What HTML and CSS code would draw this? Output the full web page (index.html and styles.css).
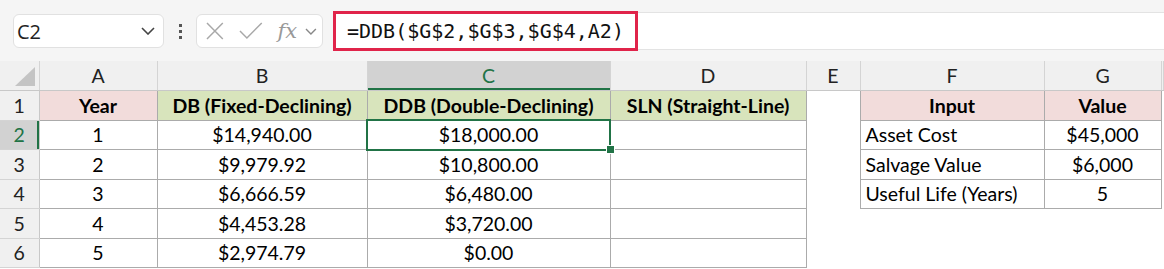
FILE: index.html
```html
<!DOCTYPE html>
<html lang="en">

<head>
  <meta charset="utf-8">
  <title>DDB depreciation</title>
  <link rel="stylesheet" href="styles.css">
</head>

<body>
  <div class="toolbar">
    <div class="name-box">
      <span>C2</span>
      <svg class="chevron" width="14" height="8" viewBox="0 0 14 8"><path d="M1 1 L7 7 L13 1" fill="none" stroke="#444" stroke-width="1.6"/></svg>
    </div>
    <div class="dots"><i></i><i></i><i></i></div>
    <div class="fx-box">
      <svg width="18" height="18" viewBox="0 0 18 18"><path d="M1 1 L17 17 M17 1 L1 17" stroke="#a8a8a8" stroke-width="1.5" fill="none"/></svg>
      <svg width="24" height="18" viewBox="0 0 24 18"><path d="M1 9 L8 16 L23 1" stroke="#a8a8a8" stroke-width="1.5" fill="none"/></svg>
      <span class="fx">fx</span>
      <svg width="12" height="7" viewBox="0 0 12 7"><path d="M1 1 L6 6 L11 1" fill="none" stroke="#888" stroke-width="1.4"/></svg>
    </div>
    <div class="formula-bar">
      <div class="formula">=DDB($G$2,$G$3,$G$4,A2)</div>
    </div>
  </div>

  <table class="sheet">
    <colgroup>
      <col style="width:39px">
      <col style="width:118px">
      <col style="width:210px">
      <col style="width:243px">
      <col style="width:196px">
      <col style="width:54px">
      <col style="width:184px">
      <col style="width:117px">
      <col>
    </colgroup>
    <tr class="heads">
      <th class="corner"><svg width="20" height="19" viewBox="0 0 20 19"><polygon points="20,0 20,19 0,19" fill="#c4c4c4"/></svg></th>
      <th>A</th><th>B</th><th class="sel">C</th><th>D</th><th>E</th><th>F</th><th>G</th><th></th>
    </tr>
    <tr>
      <th class="row-head">1</th>
      <td class="b pink bold">Year</td>
      <td class="b green bold">DB (Fixed-Declining)</td>
      <td class="b green bold">DDB (Double-Declining)</td>
      <td class="b green bold">SLN (Straight-Line)</td>
      <td></td>
      <td class="b pink bold">Input</td>
      <td class="b pink bold">Value</td>
      <td></td>
    </tr>
    <tr>
      <th class="row-head sel">2</th>
      <td class="b">1</td>
      <td class="b">$14,940.00</td>
      <td class="b active">$18,000.00</td>
      <td class="b"></td>
      <td></td>
      <td class="b left">Asset Cost</td>
      <td class="b">$45,000</td>
      <td></td>
    </tr>
    <tr>
      <th class="row-head">3</th>
      <td class="b">2</td>
      <td class="b">$9,979.92</td>
      <td class="b">$10,800.00</td>
      <td class="b"></td>
      <td></td>
      <td class="b left">Salvage Value</td>
      <td class="b">$6,000</td>
      <td></td>
    </tr>
    <tr>
      <th class="row-head">4</th>
      <td class="b">3</td>
      <td class="b">$6,666.59</td>
      <td class="b">$6,480.00</td>
      <td class="b"></td>
      <td></td>
      <td class="b left">Useful Life (Years)</td>
      <td class="b">5</td>
      <td></td>
    </tr>
    <tr>
      <th class="row-head">5</th>
      <td class="b">4</td>
      <td class="b">$4,453.28</td>
      <td class="b">$3,720.00</td>
      <td class="b"></td>
      <td></td><td></td><td></td><td></td>
    </tr>
    <tr>
      <th class="row-head">6</th>
      <td class="b">5</td>
      <td class="b">$2,974.79</td>
      <td class="b">$0.00</td>
      <td class="b"></td>
      <td></td><td></td><td></td><td></td>
    </tr>
  </table>
</body>

</html>
```

FILE: styles.css
```css
body {
  margin: 0;
  background-color: #fff;
  color: #000;
  font-family: Lato, "Open Sans", sans-serif;
  overflow: hidden;
}
.toolbar {
  display: flex;
  align-items: center;
  height: 61px;
  padding: 12px 0 11px 13px;
  box-sizing: border-box;
  background-color: #f5f5f5;
}
.name-box {
  display: flex;
  align-items: center;
  justify-content: space-between;
  width: 151px;
  height: 34px;
  box-sizing: border-box;
  padding: 0 8px 0 3px;
  background-color: #fff;
  border: 1px solid #e1e1e1;
  border-radius: 6px;
  font-family: "Open Sans", sans-serif;
  font-size: 20px;
  color: #222;
}
.dots {
  display: flex;
  flex-direction: column;
  align-items: center;
  gap: 3px;
  width: 32px;
}
.dots i {
  width: 3px;
  height: 3px;
  background-color: #555;
}
.fx-box {
  display: flex;
  align-items: center;
  width: 127px;
  height: 34px;
  box-sizing: border-box;
  padding: 0 5px 0 9px;
  gap: 15px;
  background-color: #fff;
  border: 1px solid #e1e1e1;
  border-radius: 6px;
}
.fx-box .fx {
  font-family: "DejaVu Serif", serif;
  font-style: italic;
  font-size: 21px;
  color: #999;
  margin-right: -7px;
}
.formula-bar {
  flex: 1;
  height: 38px;
  margin-left: 10px;
  background-color: #fff;
  border-top: 1px solid #e3e3e3;
  border-bottom: 1px solid #e3e3e3;
  box-sizing: border-box;
}
.formula {
  width: 305px;
  height: 40px;
  margin-top: -2px;
  box-sizing: border-box;
  padding-left: 11px;
  border: 3px solid #e0244a;
  font-family: "DejaVu Sans Mono", monospace;
  font-size: 20px;
  line-height: 34px;
  color: #111;
}
.sheet {
  border-collapse: collapse;
  table-layout: fixed;
  width: 100%;
  font-size: 19.5px;
}
.sheet th,
.sheet td {
  padding: 0;
  text-align: center;
  white-space: nowrap;
  overflow: hidden;
}
.heads th {
  height: 28px;
  background-color: #f0f0f0;
  font-weight: normal;
  color: #222;
  border-right: 1px solid #d4d4d4;
  border-bottom: 1px solid #c8c8c8;
}
.heads th.sel {
  background-color: #d2d2d2;
  color: #217346;
  box-shadow: inset 0 -2px 0 #217346;
}
.heads .corner {
  text-align: right;
  vertical-align: bottom;
}
.heads .corner svg {
  display: block;
  margin: 0 4px 4px auto;
}
.sheet tr {
  height: 29.5px;
}
.row-head {
  background-color: #f0f0f0;
  font-weight: normal;
  color: #222;
  border-right: 1px solid #c8c8c8;
  border-bottom: 1px solid #d4d4d4;
}
.row-head.sel {
  background-color: #d2d2d2;
  color: #217346;
  box-shadow: inset -2px 0 0 #217346;
}
td.b {
  border: 1px solid #ababab;
}
td.left {
  text-align: left;
  padding-left: 5px;
}
.bold {
  font-weight: bold;
}
.pink {
  background-color: #f2dcdb;
}
.green {
  background-color: #d8e4bc;
}
td.active {
  position: relative;
  overflow: visible;
  outline: 2px solid #217346;
  outline-offset: -1px;
}
td.active::after {
  content: "";
  position: absolute;
  right: -5px;
  bottom: -5px;
  width: 7px;
  height: 7px;
  background-color: #217346;
  border: 1px solid #fff;
}
```
